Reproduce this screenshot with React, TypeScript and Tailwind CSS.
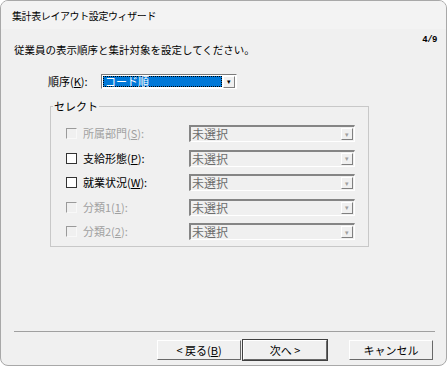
import React from "react";

const font = "font-['Noto_Sans_CJK_JP','Noto_Sans_CJK_SC',sans-serif]";

function Check({ disabled }: { disabled?: boolean }) {
  return (
    <span
      className={`block w-[11px] h-[11px] shrink-0 border ${
        disabled
          ? "border-t-[#9a9a9a] border-l-[#9a9a9a] border-r-[#f8f8f8] border-b-[#f8f8f8] bg-[#f0f0f0]"
          : "border-[#333333] bg-white"
      }`}
    />
  );
}

function DropButton({ disabled }: { disabled?: boolean }) {
  return (
    <span
      className={`flex items-center justify-center w-[12px] h-[12px] border border-t-white border-l-white border-r-[#808080] border-b-[#808080] bg-[#f0f0f0] text-[7px] leading-none ${
        disabled ? "text-[#a0a0a0]" : "text-black"
      }`}
    >
      ▾
    </span>
  );
}

function DisabledCombo() {
  return (
    <div className="flex items-center justify-between w-[166px] h-[17px] border-t-2 border-l-2 border-t-[#858585] border-l-[#858585] border-r border-b border-r-white border-b-white bg-[#f0f0f0] pl-[1px] pr-[1px]">
      <span className="text-[12px] leading-none text-[#6d6d6d]">未選択</span>
      <DropButton disabled />
    </div>
  );
}

const rows = [
  { label: "所属部門", key: "S", disabled: true },
  { label: "支給形態", key: "P", disabled: false },
  { label: "就業状況", key: "W", disabled: false },
  { label: "分類1", key: "1", disabled: true },
  { label: "分類2", key: "2", disabled: true },
];

function WinButton({ children, primary }: { children: React.ReactNode; primary?: boolean }) {
  return (
    <div
      className={`w-[86px] h-[22px] ${primary ? "border border-[#404040]" : "border border-transparent"}`}
    >
      <div className="w-full h-full flex items-center justify-center border border-t-white border-l-white border-r-[#696969] border-b-[#696969] bg-[#f0f0f0] text-[11px] leading-none text-black whitespace-pre">
        {children}
      </div>
    </div>
  );
}

export default function App() {
  return (
    <div className={`w-[448px] h-[366px] bg-white ${font}`}>
      <div className="w-[447px] h-[366px] rounded-[8px] border border-[#a8a8a8] bg-[#f0f0f0] overflow-hidden flex flex-col">
        {/* Title bar */}
        <div className="h-[28px] shrink-0 flex items-center pl-[11px] bg-[#f3f3f3] text-[10px] tracking-[-0.4px] text-black">
          集計表レイアウト設定ウィザード
        </div>

        {/* Body */}
        <div className="flex-1 flex flex-col pl-[13px] pr-[9px] pt-[5px] pb-[2px]">
          <div className="flex justify-between items-start">
            <p className="mt-[9px] h-[14px] leading-[14px] text-[10.5px] text-black">
              従業員の表示順序と集計対象を設定してください。
            </p>
            <span className="h-[12px] leading-[12px] text-[9px] font-bold font-['Liberation_Mono',monospace] tracking-[-0.5px] text-black">
              4/9
            </span>
          </div>

          {/* Sort order */}
          <div className="flex items-center mt-[17px] ml-[34px] h-[15px]">
            <span className="w-[53px] text-[11px] leading-none text-black">
              順序(<span className="underline">K</span>):
            </span>
            <div className="flex items-center w-[136px] h-[15px] border-t border-l border-t-[#7a7a7a] border-l-[#7a7a7a] border-r border-b border-r-white border-b-white bg-white p-[1px]">
              <div className="flex-1 h-full border border-dotted border-black bg-[#0078d7] flex items-center pl-[1px]">
                <span className="text-[11px] leading-none text-white">コード順</span>
              </div>
              <span className="ml-[1px]">
                <DropButton />
              </span>
            </div>
          </div>

          {/* Select group */}
          <fieldset className="mt-[11px] ml-[36px] w-[319px] border border-[#c8c8c8] pt-[12px] pb-[6px]">
            <legend className="ml-[2px] px-[1px] h-[13px] text-[11px] leading-[13px] text-black">セレクト</legend>
            <div className="flex flex-col gap-[7.5px] pl-[15px]">
              {rows.map((r) => (
                <div key={r.label} className="flex items-center h-[17px]">
                  <Check disabled={r.disabled} />
                  <span
                    className={`ml-[6px] w-[106px] text-[11px] leading-none ${
                      r.disabled ? "text-[#a0a0a0]" : "text-black"
                    }`}
                  >
                    {r.label}(<span className="underline">{r.key}</span>):
                  </span>
                  <DisabledCombo />
                </div>
              ))}
            </div>
          </fieldset>

          <div className="flex-1" />

          {/* Separator */}
          <div className="w-[421px] h-px bg-[#a0a0a0]" />

          {/* Buttons */}
          <div className="flex items-center mt-[7px] mb-[2px] ml-[142px]">
            <WinButton>
              {"< "}戻る(<span className="underline">B</span>)
            </WinButton>
            <WinButton primary>{"次へ >"}</WinButton>
            <div className="ml-[20px]">
              <WinButton>キャンセル</WinButton>
            </div>
          </div>
        </div>
      </div>
    </div>
  );
}
